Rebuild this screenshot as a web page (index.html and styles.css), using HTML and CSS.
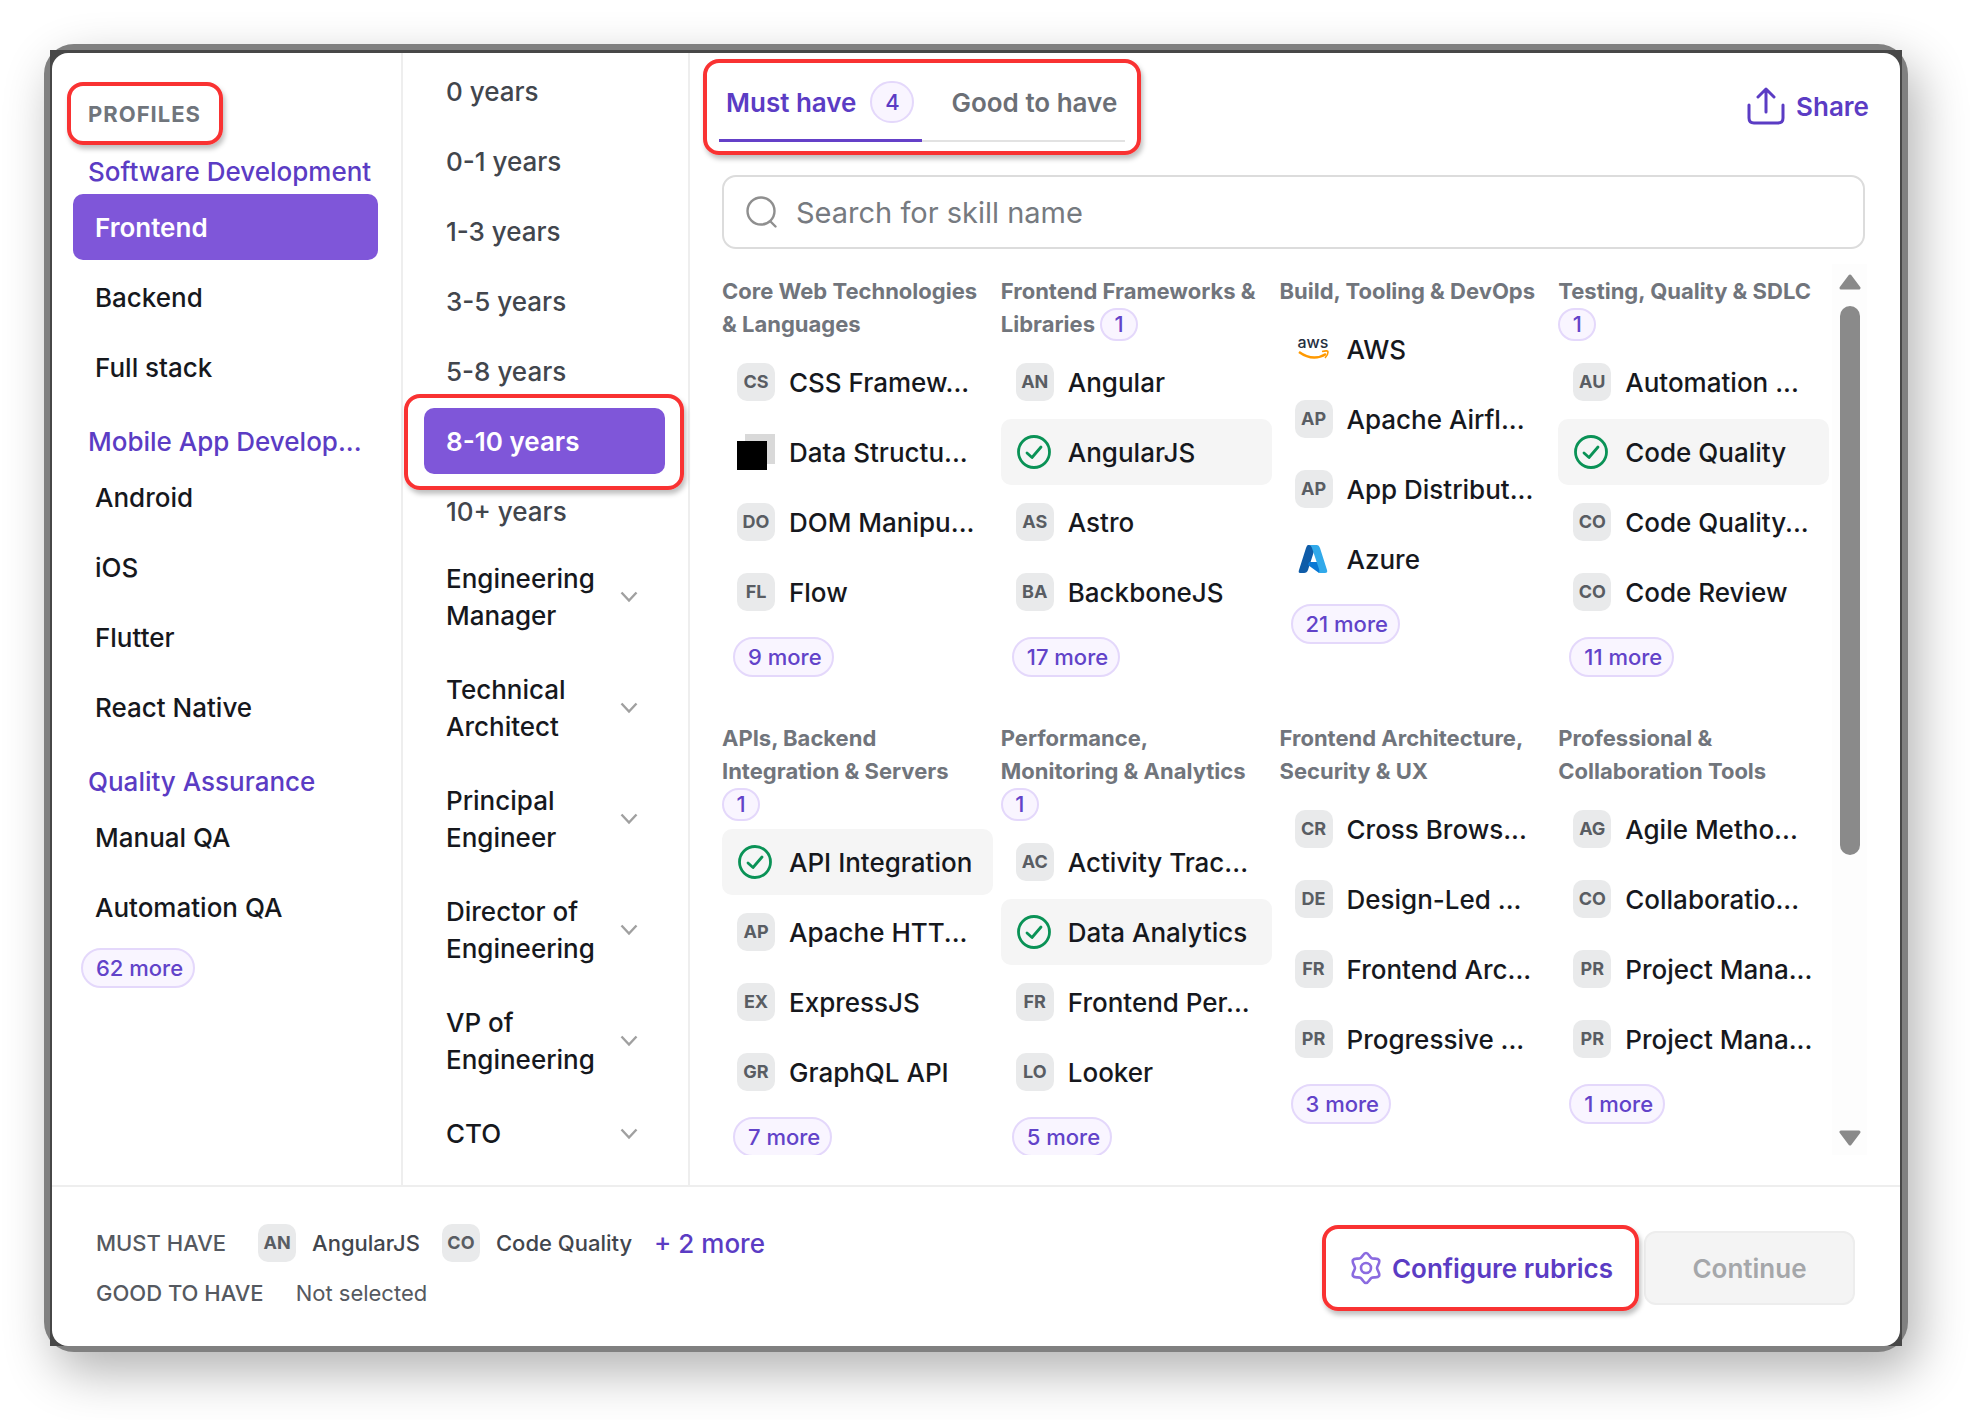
FILE: index.html
```html
<!DOCTYPE html>
<html lang="en">
<head>
  <meta charset="utf-8">
  <title>Select skills</title>
  <link rel="stylesheet" href="styles.css">
</head>
<body>
  <!-- shared icons -->
  <svg class="sprite" aria-hidden="true">
    <symbol id="chevron" viewBox="0 0 18 12">
      <path d="M1.5 1.5 L9 9.5 L16.5 1.5" fill="none" stroke="#a0a0a0" stroke-width="2.4"/>
    </symbol>
    <symbol id="check" viewBox="0 0 38 38">
      <circle cx="18" cy="19" r="15.5" fill="none" stroke="#0a9256" stroke-width="2.8"/>
      <path d="M11 20 L16 24.5 L25 14" fill="none" stroke="#0a9256" stroke-width="2.8" stroke-linecap="round" stroke-linejoin="round"/>
    </symbol>
  </svg>

  <div class="frame">
    <div class="backdrop">
      <div class="card">
        <div class="columns">
          <nav class="profiles">
            <h2 class="profiles-title callout"><span>PROFILES</span></h2>

            <section class="profile-group">
              <h3>Software Development</h3>
              <button class="option active">Frontend</button>
              <button class="option">Backend</button>
              <button class="option">Full stack</button>
            </section>
            <section class="profile-group">
              <h3>Mobile App Develop...</h3>
              <button class="option">Android</button>
              <button class="option">iOS</button>
              <button class="option">Flutter</button>
              <button class="option">React Native</button>
            </section>
            <section class="profile-group">
              <h3>Quality Assurance</h3>
              <button class="option">Manual QA</button>
              <button class="option">Automation QA</button>
            </section>
            <button class="pill">62 more</button>
          </nav>

          <div class="levels">
            <div class="years">
              <button class="option">0 years</button>
              <button class="option">0-1 years</button>
              <button class="option">1-3 years</button>
              <button class="option">3-5 years</button>
              <button class="option">5-8 years</button>
              <div class="selected-year callout"><button class="option active">8-10 years</button></div>
              <button class="option">10+ years</button>
            </div>
            <div class="roles">
              <button class="role"><span>Engineering Manager</span><svg><use href="#chevron"/></svg></button>
              <button class="role"><span>Technical Architect</span><svg><use href="#chevron"/></svg></button>
              <button class="role"><span>Principal Engineer</span><svg><use href="#chevron"/></svg></button>
              <button class="role"><span>Director of Engineering</span><svg><use href="#chevron"/></svg></button>
              <button class="role"><span>VP of Engineering</span><svg><use href="#chevron"/></svg></button>
              <button class="role"><span>CTO</span><svg><use href="#chevron"/></svg></button>
            </div>
          </div>

          <main class="skills">
            <header class="skills-header">
              <div class="tabs callout" role="tablist">
                <button class="tab selected" role="tab" aria-selected="true">Must have <span class="tab-count">4</span></button>
                <button class="tab" role="tab" aria-selected="false">Good to have</button>
              </div>
              <button class="share">
                <svg viewBox="0 0 38 38" width="38" height="38" fill="none" stroke="#5b3cc4" stroke-width="3" stroke-linecap="round" stroke-linejoin="round">
                  <path d="M19 25 V2 M11 10 L19 2 L27 10"/>
                  <path d="M2 18 V31 Q2 36 7 36 H31 Q36 36 36 31 V18"/>
                </svg>
                Share
              </button>
            </header>

            <div class="skills-body">
              <div class="search">
                <svg viewBox="0 0 32 32" width="32" height="32" fill="none" stroke="#8f8f8f" stroke-width="2.4" stroke-linecap="round">
                  <circle cx="15" cy="15" r="13.5"/>
                  <path d="M24.500 25.500 L29.500 30.500"/>
                </svg>
                <input type="text" placeholder="Search for skill name" aria-label="Search for skill name">
              </div>

              <div class="skills-scroll">
                <div class="grid">
                  <section class="category">
                    <h4>Core Web Technologies &amp; Languages</h4>
                    <button class="skill"><span class="tag">CS</span>CSS Framew...</button>
                    <button class="skill">
                      <svg viewBox="0 0 38 38" width="38" height="38"><path d="M8 1H38V31H8z" fill="#d9d9d9"/><path d="M0 8H30V37H0z" fill="#000"/></svg>Data Structu...</button>
                    <button class="skill"><span class="tag">DO</span>DOM Manipu...</button>
                    <button class="skill"><span class="tag">FL</span>Flow</button>
                    <button class="pill">9 more</button>
                  </section>

                  <section class="category">
                    <h4>Frontend Frameworks &amp; Libraries <span class="count">1</span></h4>
                    <button class="skill"><span class="tag">AN</span>Angular</button>
                    <button class="skill picked"><svg width="38" height="38"><use href="#check"/></svg>AngularJS</button>
                    <button class="skill"><span class="tag">AS</span>Astro</button>
                    <button class="skill"><span class="tag">BA</span>BackboneJS</button>
                    <button class="pill">17 more</button>
                  </section>

                  <section class="category">
                    <h4>Build, Tooling &amp; DevOps</h4>
                    <button class="skill">
                      <svg viewBox="0 0 38 38" width="38" height="38">
                        <text x="18" y="18" text-anchor="middle" class="aws-word">aws</text>
                        <path d="M4 22 Q18 32 31 24" fill="none" stroke="#f90" stroke-width="2.4"/>
                        <path d="M27 21.500 Q33 20 33 22 Q33 25 30 28" fill="none" stroke="#f90" stroke-width="1.6"/>
                      </svg>AWS</button>
                    <button class="skill"><span class="tag">AP</span>Apache Airfl...</button>
                    <button class="skill"><span class="tag">AP</span>App Distribut...</button>
                    <button class="skill">
                      <svg viewBox="0 0 38 38" width="38" height="38">
                        <path d="M13 5 H21 L13 30 Q12 33 9 33 H5 Q3 33 4 30 L11 8 Q12 5 13 5z" fill="#0f5ca8"/>
                        <path d="M14 22 H26 L28 33 H24 L13 25z" fill="#0a78d4"/>
                        <path d="M14 5 H22 Q24 5 25 8 L32 30 Q33 33 30 33 H23 Q25 32 24 29 L17 8 Q16 5 14 5z" fill="#31a9ea"/>
                      </svg>Azure</button>
                    <button class="pill">21 more</button>
                  </section>

                  <section class="category">
                    <h4>Testing, Quality &amp; SDLC <span class="count">1</span></h4>
                    <button class="skill"><span class="tag">AU</span>Automation ...</button>
                    <button class="skill picked"><svg width="38" height="38"><use href="#check"/></svg>Code Quality</button>
                    <button class="skill"><span class="tag">CO</span>Code Quality...</button>
                    <button class="skill"><span class="tag">CO</span>Code Review</button>
                    <button class="pill">11 more</button>
                  </section>

                  <section class="category">
                    <h4>APIs, Backend Integration &amp; Servers <span class="count">1</span></h4>
                    <button class="skill picked"><svg width="38" height="38"><use href="#check"/></svg>API Integration</button>
                    <button class="skill"><span class="tag">AP</span>Apache HTT...</button>
                    <button class="skill"><span class="tag">EX</span>ExpressJS</button>
                    <button class="skill"><span class="tag">GR</span>GraphQL API</button>
                    <button class="pill">7 more</button>
                  </section>

                  <section class="category">
                    <h4>Performance, Monitoring &amp; Analytics <span class="count">1</span></h4>
                    <button class="skill"><span class="tag">AC</span>Activity Trac...</button>
                    <button class="skill picked"><svg width="38" height="38"><use href="#check"/></svg>Data Analytics</button>
                    <button class="skill"><span class="tag">FR</span>Frontend Per...</button>
                    <button class="skill"><span class="tag">LO</span>Looker</button>
                    <button class="pill">5 more</button>
                  </section>

                  <section class="category">
                    <h4>Frontend Architecture, Security &amp; UX</h4>
                    <button class="skill"><span class="tag">CR</span>Cross Brows...</button>
                    <button class="skill"><span class="tag">DE</span>Design-Led ...</button>
                    <button class="skill"><span class="tag">FR</span>Frontend Arc...</button>
                    <button class="skill"><span class="tag">PR</span>Progressive ...</button>
                    <button class="pill">3 more</button>
                  </section>

                  <section class="category">
                    <h4>Professional &amp; Collaboration Tools</h4>
                    <button class="skill"><span class="tag">AG</span>Agile Metho...</button>
                    <button class="skill"><span class="tag">CO</span>Collaboratio...</button>
                    <button class="skill"><span class="tag">PR</span>Project Mana...</button>
                    <button class="skill"><span class="tag">PR</span>Project Mana...</button>
                    <button class="pill">1 more</button>
                  </section>
                </div>

                <div class="scrollbar">
                  <svg viewBox="0 0 22 16" width="22" height="16"><path d="M11 2 L20 14 H2z" fill="#8a8a8a" stroke="#8a8a8a" stroke-width="3" stroke-linejoin="round"/></svg>
                  <div class="track"><div class="thumb"></div></div>
                  <svg viewBox="0 0 22 16" width="22" height="16"><path d="M11 14 L2 2 H20z" fill="#8a8a8a" stroke="#8a8a8a" stroke-width="3" stroke-linejoin="round"/></svg>
                </div>
              </div>
            </div>
          </main>
        </div>

        <footer class="footer">
          <div class="summary">
            <div class="summary-row">
              <span class="summary-label">MUST HAVE</span>
              <span class="chosen"><span class="tag">AN</span>AngularJS</span>
              <span class="chosen"><span class="tag">CO</span>Code Quality</span>
              <a href="#" class="more-link">+ 2 more</a>
            </div>
            <div class="summary-row">
              <span class="summary-label">GOOD TO HAVE</span>
              <span class="none">Not selected</span>
            </div>
          </div>
          <div class="actions">
            <div class="callout">
              <button class="configure">
                <svg viewBox="0 0 32 34" width="32" height="34" fill="none" stroke="#8b6be0" stroke-width="2.6" stroke-linejoin="round">
                  <path d="M16 2 C18.500 2 19.500 6 21.500 7.200 C23.500 8.400 27.500 6.500 29 9 C30.500 11.500 27 14.500 27 17 C27 19.500 30.500 22.500 29 25 C27.500 27.500 23.500 25.600 21.500 26.800 C19.500 28 18.500 32 16 32 C13.500 32 12.500 28 10.500 26.800 C8.500 25.600 4.500 27.500 3 25 C1.500 22.500 5 19.500 5 17 C5 14.500 1.500 11.500 3 9 C4.500 6.500 8.500 8.400 10.500 7.200 C12.500 6 13.500 2 16 2z"/>
                  <circle cx="16" cy="17" r="5"/>
                </svg>
                Configure rubrics
              </button>
            </div>
            <button class="continue" disabled>Continue</button>
          </div>
        </footer>
      </div>
    </div>
  </div>
</body>
</html>
```
FILE: styles.css
```css
* {
  box-sizing: border-box;
}
body {
  margin: 0;
  height: 100vh;
  padding: 44px 68px 68px 44px;
  background: #fff;
  color: #16181d;
  font-family: Inter, "Liberation Sans", sans-serif;
  font-size: 26px;
  font-weight: 500;
}
h2, h3, h4 {
  margin: 0;
}
button {
  border: none;
  padding: 0;
  background: none;
  color: inherit;
  font: inherit;
  text-align: left;
  cursor: pointer;
}
.sprite {
  position: absolute;
  width: 0;
  height: 0;
}

/* window frame */
.frame {
  height: 100%;
  padding: 6px;
  background: #808080;
  border-radius: 30px;
  box-shadow: 10px 20px 50px rgba(0, 0, 0, 0.3);
}
.backdrop {
  height: 100%;
  padding: 3px 2px 0;
  background: #474747;
}
.card {
  display: flex;
  flex-direction: column;
  height: 100%;
  background: #fff;
  border-radius: 16px;
}
.columns {
  display: flex;
  flex: 1;
  min-height: 0;
}

/* red highlight drawn around a control */
.callout {
  position: relative;
}
.callout::after {
  content: "";
  position: absolute;
  inset: 0;
  border: 4px solid #f93232;
  border-radius: 16px;
  box-shadow: 2px 4px 5px rgba(0, 0, 0, 0.25);
  pointer-events: none;
}

/* list options */
.option {
  display: block;
  width: 100%;
  height: 66px;
  padding: 0 22px;
  border-radius: 10px;
}
.option.active {
  background: #7f56d9;
  color: #fff;
  font-weight: 600;
}

.profiles {
  width: 351px;
  padding: 45px 23px 0 21px;
  border-right: 2px solid #eee;
}
.profiles-title {
  width: fit-content;
  padding: 0 15px;
  color: #70757c;
  font-size: 22px;
  font-weight: 700;
  line-height: 32px;
  letter-spacing: 1px;
}
.profiles-title::after {
  inset: -16px -7px -15px -6px;
}
.profile-group {
  display: flex;
  flex-direction: column;
  gap: 4px;
  margin-top: 26px;
}
.profile-group h3 {
  padding: 0 0 2px 15px;
  color: #5b3cc4;
  font-size: 26px;
  font-weight: 500;
  line-height: 32px;
  white-space: nowrap;
}
.pill {
  height: 40px;
  padding: 0 10px 0 13px;
  border: 2px solid #e4d8fb;
  border-radius: 20px;
  background: #f9f5ff;
  color: #6243c9;
  font-size: 22px;
}
.profiles .pill {
  margin: 8px 0 0 8px;
}

.levels {
  width: 287px;
  padding: 5px 23px 0 21px;
  border-right: 2px solid #eee;
}
.years {
  display: flex;
  flex-direction: column;
  gap: 4px;
  color: #42464d;
}
.selected-year::after {
  inset: -14px -19px -16px -20px;
}
.roles {
  display: flex;
  flex-direction: column;
  gap: 37px;
  margin-top: 16px;
  padding: 0 27px 0 22px;
}
.role {
  display: flex;
  align-items: center;
  justify-content: space-between;
  line-height: 37px;
}
.role span {
  width: 152px;
}
.role svg {
  width: 18px;
  height: 12px;
}

/* skills pane */
.skills {
  display: flex;
  flex: 1;
  flex-direction: column;
  min-width: 0;
}
.skills-header {
  display: flex;
  align-items: flex-start;
  justify-content: space-between;
  padding: 10px 31px 0 29px;
}
.tabs {
  display: flex;
  font-weight: 600;
}
.tabs::after {
  inset: -4px -16px -13px;
}
.tab {
  display: flex;
  align-items: center;
  gap: 14px;
  height: 79px;
  padding: 2px 8px 0 29px;
  border-bottom: 2px solid #e2e2e2;
  color: #6b6f76;
}
.tab.selected {
  padding-left: 7px;
  border-bottom: 3px solid #6440c8;
  color: #5b3cc4;
}
.tab-count {
  width: 44px;
  height: 42px;
  border: 2px solid #e4d8fb;
  border-radius: 21px;
  background: #f9f5ff;
  font-size: 22px;
  font-weight: 500;
  line-height: 38px;
  text-align: center;
}
.share {
  display: flex;
  align-items: center;
  gap: 11px;
  margin-top: 24px;
  color: #5b3cc4;
  font-weight: 600;
}
.skills-body {
  display: flex;
  flex: 1;
  flex-direction: column;
  min-height: 0;
  padding: 33px 33px 30px 32px;
}
.search {
  display: flex;
  align-items: center;
  gap: 18px;
  height: 74px;
  flex-shrink: 0;
  margin-right: 2px;
  padding: 0 22px;
  border: 2px solid #dcdcdc;
  border-radius: 14px;
}
.search input {
  flex: 1;
  min-width: 0;
  padding: 0;
  border: none;
  outline: none;
  color: #16181d;
  font: 400 29px Inter, "Liberation Sans", sans-serif;
}
.search input::placeholder {
  color: #767a80;
}
.skills-scroll {
  display: flex;
  flex: 1;
  gap: 3px;
  min-height: 0;
  margin-top: 15px;
  overflow: hidden;
}
.grid {
  display: grid;
  flex: 1;
  grid-template-columns: repeat(4, 1fr);
  align-content: start;
  gap: 45px 8px;
  padding-top: 11px;
}
.category {
  display: flex;
  flex-direction: column;
  align-items: flex-start;
  gap: 4px;
  min-width: 0;
}
.category h4 {
  margin-bottom: 4px;
  padding-right: 8px;
  color: #71757c;
  font-size: 22px;
  font-weight: 700;
  line-height: 33px;
}
.count {
  display: inline-block;
  width: 38px;
  height: 33px;
  border: 2px solid #e4d8fb;
  border-radius: 17px;
  background: #f9f5ff;
  color: #6243c9;
  font-weight: 500;
  line-height: 29px;
  text-align: center;
  vertical-align: top;
}
.skill {
  display: flex;
  align-items: center;
  gap: 14px;
  width: 100%;
  height: 66px;
  padding-left: 15px;
  border-radius: 10px;
  white-space: nowrap;
}
.skill.picked {
  background: #f5f5f5;
}
.tag {
  flex-shrink: 0;
  width: 38px;
  height: 38px;
  border-radius: 10px;
  background: #e9eaeb;
  color: #595d63;
  font-size: 18px;
  font-weight: 700;
  line-height: 38px;
  text-align: center;
}
.aws-word {
  fill: #252f3e;
  font-size: 16px;
  font-weight: 500;
}
.category .pill {
  margin: 8px 0 0 11px;
}

.scrollbar {
  display: flex;
  flex-direction: column;
  align-items: center;
  width: 35px;
  padding: 10px 0 9px;
  background: #fdfdfd;
}
.track {
  flex: 1;
  padding: 16px 0;
}
.thumb {
  width: 20px;
  height: 68%;
  border-radius: 10px;
  background: #8a8a8a;
}

/* footer */
.footer {
  display: flex;
  align-items: center;
  justify-content: space-between;
  padding: 37px 45px 34px 44px;
  border-top: 2px solid #eee;
}
.summary {
  display: flex;
  flex-direction: column;
  gap: 12px;
  color: #555960;
  font-size: 22px;
}
.summary-row {
  display: flex;
  align-items: center;
  height: 38px;
}
.summary-label {
  margin-right: 32px;
}
.chosen {
  display: flex;
  align-items: center;
  gap: 16px;
  margin-right: 22px;
  color: #42464d;
}
.none {
  font-weight: 400;
}
.more-link {
  color: #5b3cc4;
  font-size: 26px;
  text-decoration: none;
}
.actions {
  display: flex;
  align-items: center;
  font-weight: 600;
}
.configure {
  display: flex;
  align-items: center;
  gap: 10px;
  height: 74px;
  padding: 0 31px 0 28px;
  color: #5b3cc4;
}
.actions .callout::after {
  inset: -6px 5px -6px 0;
}
.continue {
  width: 211px;
  height: 74px;
  border: 2px solid #ededed;
  border-radius: 12px;
  background: #f4f4f4;
  color: #a5a7aa;
  text-align: center;
}
```
